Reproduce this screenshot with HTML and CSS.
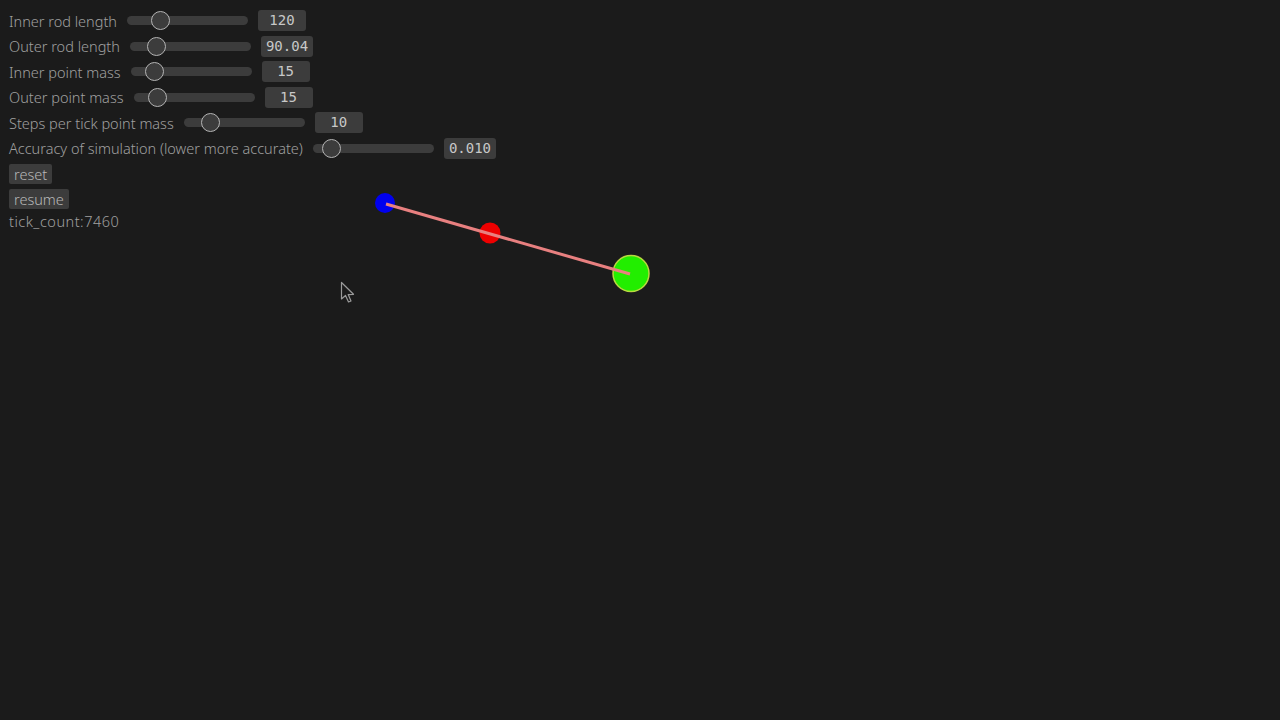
FILE: index.html
```html
<!DOCTYPE html>
<html>
<head>
<meta charset="utf-8">
<link rel="stylesheet" href="styles.css">
</head>
<body>
<div class="panel">
  <div class="row"><span class="label">Inner rod length</span><div class="track"><div class="knob" style="left:33px"></div></div><span class="value">120</span></div>
  <div class="row"><span class="label">Outer rod length</span><div class="track"><div class="knob" style="left:27px"></div></div><span class="value">90.04</span></div>
  <div class="row"><span class="label">Inner point mass</span><div class="track"><div class="knob" style="left:24px"></div></div><span class="value">15</span></div>
  <div class="row"><span class="label">Outer point mass</span><div class="track"><div class="knob" style="left:24px"></div></div><span class="value">15</span></div>
  <div class="row"><span class="label">Steps per tick point mass</span><div class="track"><div class="knob" style="left:27px"></div></div><span class="value">10</span></div>
  <div class="row"><span class="label">Accuracy of simulation (lower more accurate)</span><div class="track"><div class="knob" style="left:19px"></div></div><span class="value">0.010</span></div>
  <div class="btnrow"><span class="btn">reset</span></div>
  <div class="btnrow"><span class="btn">resume</span></div>
  <div class="ticks">tick_count:7460</div>
</div>
<svg class="canvas" width="1280" height="720" viewBox="0 0 1280 720">
  <circle cx="385" cy="203" r="10" fill="#0000ee"/>
  <circle cx="490" cy="233" r="10.5" fill="#ee0000"/>
  <circle cx="631" cy="273.5" r="18" fill="#22ee00" stroke="#b8d840" stroke-width="1.5"/>
  <line x1="386" y1="204" x2="630" y2="274" stroke="#e88080" stroke-width="3"/>
  <path d="M341.5 282.5 L341.5 299 L345.5 295.5 L348.5 302 L351 301 L348.2 294.6 L353.5 294.3 Z" fill="#1b1b1b" stroke="#9a9a9a" stroke-width="1.2" stroke-linejoin="round"/>
</svg>
</body>
</html>
```
FILE: styles.css
```css
html, body {
  margin: 0;
  padding: 0;
  background: #1b1b1b;
  width: 1280px;
  height: 720px;
  overflow: hidden;
}
.panel {
  padding: 8px 0 0 8px;
  font-family: "Noto Sans", "Open Sans", sans-serif;
  font-weight: 300;
  font-size: 14.5px;
  color: #a0a0a0;
  display: flex;
  flex-direction: column;
  align-items: flex-start;
}
.row {
  height: 25.5px;
  display: flex;
  align-items: center;
}
.label {
  padding-left: 1px;
  margin-right: 10px;
  white-space: nowrap;
  line-height: 18px;
}
.track {
  position: relative;
  width: 121px;
  height: 9px;
  border-radius: 5px;
  background: #3c3c3c;
  margin-right: 10px;
}
.knob {
  position: absolute;
  top: 50%;
  width: 19px;
  height: 19px;
  box-sizing: border-box;
  margin: -9.5px 0 0 -9.5px;
  border-radius: 50%;
  border: 1.5px solid #b4b4b4;
  background: #3c3c3c;
}
.value {
  font-family: "DejaVu Sans Mono", "Liberation Mono", monospace;
  font-weight: 400;
  font-size: 14px;
  color: #c8c8c8;
  background: #3c3c3c;
  border-radius: 3px;
  height: 21px;
  line-height: 21px;
  min-width: 48px;
  padding: 0 5px;
  box-sizing: border-box;
  text-align: center;
}
.btnrow {
  height: 25px;
  display: flex;
  align-items: center;
}
.btn {
  margin-left: 1px;
  background: #3c3c3c;
  color: #b8b8b8;
  border-radius: 2px;
  height: 20px;
  line-height: 20px;
  padding: 0 5px;
}
.ticks {
  padding-left: 1px;
  line-height: 20px;
  letter-spacing: 0.5px;
}
.canvas {
  position: absolute;
  left: 0;
  top: 0;
}
```
